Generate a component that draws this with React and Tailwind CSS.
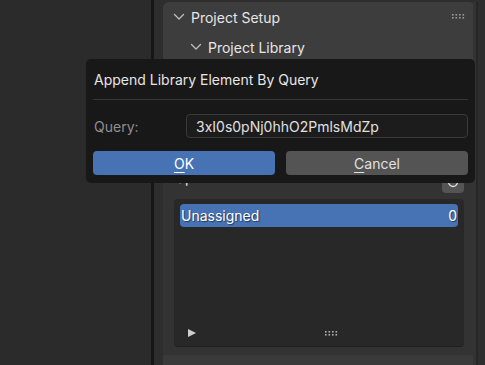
import React from "react";

function Chevron() {
  return (
    <svg width="12" height="8" viewBox="0 0 12 8" className="shrink-0">
      <path d="M1.5 1.5 L6 6 L10.5 1.5" fill="none" stroke="#bdbdbd" strokeWidth="1.3" strokeLinecap="round" strokeLinejoin="round" />
    </svg>
  );
}

function Grip({ color = "#9a9a9a" }) {
  return (
    <svg width="13" height="5" viewBox="0 0 13 5">
      {[0, 1, 2, 3].map((i) => (
        <g key={i}>
          <rect x={i * 3.5} y="0" width="1.6" height="1.6" fill={color} />
          <rect x={i * 3.5} y="3" width="1.6" height="1.6" fill={color} />
        </g>
      ))}
    </svg>
  );
}

export default function App() {
  const font = { fontFamily: "Inter, 'Noto Sans', sans-serif" };
  return (
    <div className="relative w-[485px] h-[365px] overflow-hidden flex bg-[#2e2e2e]" style={font}>
      <div className="w-[151px] h-full bg-[#2b2b2b]" />
      <div className="w-[3px] h-full bg-[#161616]" />
      <div className="flex-1 h-full flex bg-[#2e2e2e] pl-[9px] pt-[2px]">
        <div className="w-[312px] h-full flex flex-col rounded-t-[6px] bg-[#3d3d3d] overflow-hidden">
          <div className="h-[30px] flex items-center pl-[10px] pr-[10px] shrink-0">
            <Chevron />
            <span className="ml-[6px] text-[14px] text-[#e6e6e6]">Project Setup</span>
            <div className="ml-auto mt-[-2px]"><Grip /></div>
          </div>
          <div className="h-[30px] flex items-center pl-[27px] shrink-0">
            <Chevron />
            <span className="ml-[6px] text-[14px] text-[#e6e6e6]">Project Library</span>
          </div>
          <div className="h-[293px] bg-[#333333] flex flex-col pl-[11px] pr-[11px] shrink-0">
            <div className="h-[137px] flex items-end justify-between shrink-0">
              <span className="mb-[13px] ml-[2px] text-[14px] leading-[17px] text-[#e6e6e6]">Spaces</span>
              <div className="w-[22px] h-[22px] rounded-[4px] bg-[#545454] mb-[6px] flex items-center justify-center">
                <svg width="14" height="14" viewBox="0 0 14 14">
                  <path d="M11.5 7 A4.5 4.5 0 1 1 9.5 3.2" fill="none" stroke="#e0e0e0" strokeWidth="1.4" />
                  <path d="M8 1.5 L11 3 L8.5 5.5 Z" fill="#e0e0e0" />
                </svg>
              </div>
            </div>
            <div className="h-[148px] shrink-0 rounded-[4px] bg-[#282828] border-b border-[#1f1f1f] flex flex-col px-[6px] pt-[5px] pb-[8px]">
              <div className="h-[23px] rounded-[4px] bg-[#4772b3] flex items-center px-[1px] text-[14px] text-white" style={{ textShadow: "1px 1px 1px rgba(0,0,0,0.5)" }}>
                <span>Unassigned</span>
                <span className="ml-auto">0</span>
              </div>
              <div className="flex-1" />
              <div className="flex items-center h-[10px]">
                <svg width="10" height="10" viewBox="0 0 10 10" className="ml-[7px]">
                  <path d="M1 1 L9 5 L1 9 Z" fill="#cfcfcf" />
                </svg>
                <div className="ml-[128px] mt-[1px]"><Grip color="#b0b0b0" /></div>
              </div>
            </div>
          </div>
          <div className="flex-1 bg-[#3a3a3a]" />
        </div>
        <div className="w-[3px] h-full bg-[#333333] ml-[-2px]" />
        <div className="w-[2px] h-full bg-[#262626]" />
      </div>

      <div className="absolute left-[86px] top-[59px] w-[389px] h-[124px] rounded-[5px] bg-[#181818] flex flex-col px-[7px]">
        <div className="h-[40px] flex items-center pl-[1px] text-[14px] text-[#e6e6e6]">Append Library Element By Query</div>
        <div className="h-px bg-[#363636]" />
        <div className="h-[14px]" />
        <div className="flex items-center h-[24px]">
          <span className="w-[93px] pl-[1px] text-[14px] text-[#8f8f8f]">Query:</span>
          <div className="flex-1 h-[24px] rounded-[4px] border border-[#3a3a3a] bg-[#1c1c1c] flex items-center pl-[9px] text-[14px] text-[#e0e0e0]">3xI0s0pNj0hhO2PmlsMdZp</div>
        </div>
        <div className="h-[13px]" />
        <div className="flex h-[24px] gap-[11px]">
          <div className="flex-1 rounded-[4px] bg-[#4772b3] flex items-center justify-center text-[14px] text-white"><span><span className="underline underline-offset-[3px]">O</span>K</span></div>
          <div className="flex-1 rounded-[4px] bg-[#545454] flex items-center justify-center text-[14px] text-[#e0e0e0]"><span><span className="underline underline-offset-[3px]">C</span>ancel</span></div>
        </div>
      </div>
    </div>
  );
}
